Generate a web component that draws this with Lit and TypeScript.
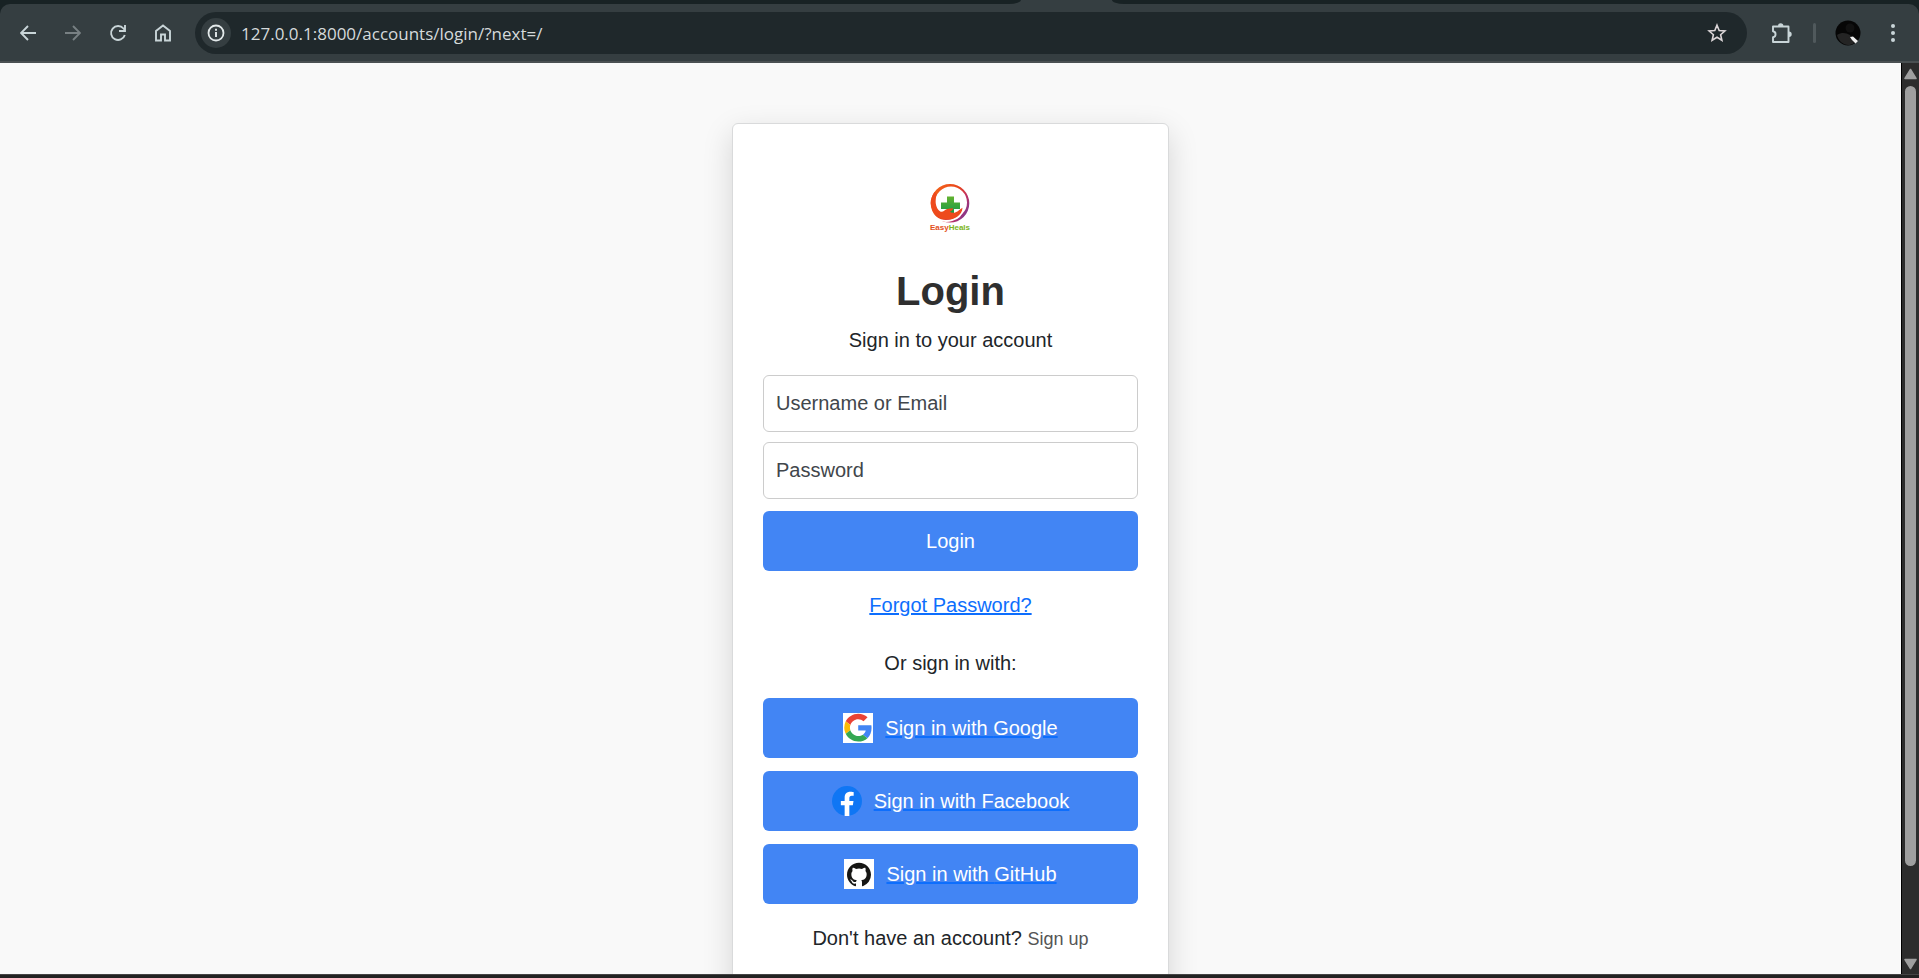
import { LitElement, html, css, svg } from "lit";
import { customElement } from "lit/decorators.js";

const icon = (size: number, body: unknown, box = "0 0 24 24") =>
  html`<svg width=${size} height=${size} viewBox=${box} fill="none" aria-hidden="true">${body}</svg>`;

const googleIcon = icon(30, svg`
  <rect width="48" height="48" fill="#fff"/>
  <g transform="translate(2 1) scale(.93)">
    <path fill="#EA4335" d="M24 9.5c3.54 0 6.71 1.22 9.21 3.6l6.85-6.85C35.9 2.38 30.47 0 24 0 14.62 0 6.51 5.38 2.56 13.22l7.98 6.19C12.43 13.72 17.74 9.5 24 9.5z"/>
    <path fill="#4285F4" d="M46.98 24.55c0-1.57-.15-3.09-.38-4.55H24v9.02h12.94c-.58 2.96-2.26 5.48-4.78 7.18l7.73 6c4.51-4.18 7.09-10.36 7.09-17.65z"/>
    <path fill="#FBBC05" d="M10.53 28.59A14.5 14.5 0 0 1 9.77 24c0-1.6.27-3.14.76-4.59l-7.98-6.19A23.99 23.99 0 0 0 0 24c0 3.88.92 7.54 2.56 10.78l7.97-6.19z"/>
    <path fill="#34A853" d="M24 48c6.48 0 11.93-2.13 15.89-5.81l-7.73-6c-2.15 1.45-4.92 2.3-8.16 2.3-6.26 0-11.57-4.22-13.47-9.91l-7.98 6.19C6.51 42.62 14.62 48 24 48z"/>
  </g>`, "0 0 48 48");

const facebookIcon = icon(30, svg`
  <circle cx="12" cy="12" r="12" fill="#0f76f4"/>
  <path fill="#fff" d="M16.67 15.47 17.2 12h-3.33V9.75c0-.95.47-1.87 1.96-1.87h1.51V4.92s-1.37-.23-2.69-.23c-2.74 0-4.53 1.66-4.53 4.67V12H7.08v3.47h3.04V24h3.75v-8.53z"/>`);

const githubIcon = icon(30, svg`
  <rect width="30" height="30" fill="#fff"/>
  <path transform="translate(3 3.5)" fill="#161614" d="M12 .3C5.37.3 0 5.67 0 12.3c0 5.3 3.44 9.8 8.2 11.38.6.11.82-.26.82-.58v-2.03c-3.34.72-4.04-1.61-4.04-1.61-.55-1.39-1.33-1.76-1.33-1.76-1.09-.74.08-.73.08-.73 1.2.09 1.84 1.24 1.84 1.24 1.07 1.83 2.8 1.3 3.49 1 .11-.78.42-1.31.76-1.61-2.66-.3-5.47-1.33-5.47-5.93 0-1.31.47-2.38 1.24-3.22-.13-.3-.54-1.52.11-3.18 0 0 1.01-.32 3.3 1.23a11.5 11.5 0 0 1 6.01 0c2.29-1.55 3.3-1.23 3.3-1.23.65 1.66.24 2.88.12 3.18.77.84 1.23 1.91 1.23 3.22 0 4.61-2.81 5.63-5.48 5.92.43.37.81 1.1.81 2.22v3.29c0 .32.22.7.83.58A12 12 0 0 0 24 12.3C24 5.67 18.63.3 12 .3z"/>`, "0 0 30 30");

const brandLogo = svg`
  <defs>
    <linearGradient id="ring" x1="0" y1=".2" x2="1" y2=".8">
      <stop offset="0" stop-color="#f4661b"/><stop offset=".5" stop-color="#e8431c"/>
      <stop offset=".72" stop-color="#c02f62"/><stop offset="1" stop-color="#743a97"/>
    </linearGradient>
    <linearGradient id="cross" x1="0" y1="0" x2="0" y2="1">
      <stop offset="0" stop-color="#62b22f"/><stop offset="1" stop-color="#159a48"/>
    </linearGradient>
  </defs>
  <path fill="url(#ring)" fill-rule="evenodd" d="M29.700 49.300a19.300 19.300 0 1 1 38.600 0a19.300 19.300 0 1 1-38.600 0zM34 48.500a16 16 0 1 0 32 0a16 16 0 1 0-32 0z"/>
  <path fill="url(#cross)" d="M46 42.500h7v6h6V55h-6v5h-7v-5h-6v-6.500h6z"/>
  <path fill="none" stroke="#fff" stroke-width="2" d="M30 58c5 9 14 10 21 8 6-1.500 10-6 11-12"/>
  <path fill="#ee4a1d" d="M29.700 49c0-4 1.500-8 4-11l2 2c-2 6-1.500 14 3.500 17.500 2.500 1.500 5-2 7-2.500s4-.700 6-.700c-.300 2-2 3-3.500 3.400 2 1.300 4 1.500 6 .600 2.500-1 4-3 6.800-4.600 0 4-2.500 7-5.300 9-3 2-6.500 3-10 2.900-4 0-8-1.600-11-4.600-3.500-3.500-5.500-8-5.500-12z"/>`;

@customElement("app-root")
export class AppRoot extends LitElement {
  static styles = css`
    * { box-sizing: border-box; }
    :host {
      display: flex;
      flex-direction: column;
      height: 100vh;
      overflow: hidden;
      background: #182224;
      color: #212529;
      font: 20px/30px "Liberation Sans", Arial, sans-serif;
    }
    svg { display: block; flex: none; }
    button { font: inherit; border: 0; padding: 0; cursor: pointer; }

    .tabs { flex: none; display: flex; height: 4px; background: #353e41; }
    .tabs-left { flex: 1021; background: #182224; border-bottom-right-radius: 12px 4px; }
    .tab-active { flex: 91; }
    .tabs-right { flex: 807; background: #182224; border-bottom-left-radius: 12px 4px; }

    .toolbar {
      flex: none;
      display: flex;
      align-items: center;
      gap: 5px;
      height: 59px;
      padding: 0 6px 0 8px;
      background: #353e41;
      border-bottom: 2px solid #4a5052;
      border-radius: 10px 10px 0 0;
      color: #c9d5d8;
    }
    .tool {
      flex: none;
      display: grid;
      place-items: center;
      width: 40px;
      height: 40px;
      background: none;
      color: inherit;
      border-radius: 50%;
    }
    .tool:disabled { color: #788083; }
    .address {
      flex: 1;
      display: flex;
      align-items: center;
      gap: 10px;
      height: 42px;
      margin: 0 9px 0 7px;
      padding: 0 10px 0 6px;
      border-radius: 21px;
      background: #1f282b;
    }
    .site-info {
      flex: none;
      display: grid;
      place-items: center;
      width: 30px;
      height: 30px;
      border-radius: 50%;
      background: #353e41;
      color: #e3e9ea;
    }
    .url {
      flex: 1;
      min-width: 0;
      height: 32px;
      padding: 2px 0 0;
      border: 0;
      outline: 0;
      background: none;
      color: #d5dadb;
      font: 17px/30px "Open Sans", "Noto Sans", sans-serif;
    }
    .divider { flex: none; width: 3px; height: 20px; margin: 0 7px; border-radius: 2px; background: #50595c; }

    .view { flex: 1; display: flex; min-height: 0; }
    .page {
      flex: 1;
      min-width: 0;
      overflow: hidden;
      display: flex;
      justify-content: center;
      align-items: flex-start;
      padding-top: 60px;
      background: #f9f9f9;
    }
    .card {
      flex: none;
      display: flex;
      flex-direction: column;
      align-items: center;
      width: 437px;
      padding: 30px 30px 60px;
      background: #fff;
      border: 1px solid #d9dadb;
      border-radius: 6px;
      box-shadow: 0 10px 30px rgba(0, 0, 0, 0.15);
    }
    .brand { margin-bottom: 13px; }
    .brand-name { font: bold 8px "Liberation Sans", Arial, sans-serif; }
    h1 { margin: 0 0 10px; font-size: 40px; line-height: 48px; color: #2f2f2f; }
    p { margin: 0; }
    form { display: flex; flex-direction: column; gap: 10px; width: 100%; margin: 20px 0 19px; }
    .field {
      width: 100%;
      height: 57px;
      padding: 0 12px;
      border: 1px solid #ccc;
      border-radius: 6px;
      background: #fff;
      color: #212529;
      font: inherit;
    }
    .field::placeholder { color: #41464b; opacity: 1; }
    .action {
      display: flex;
      align-items: center;
      justify-content: center;
      gap: 12px;
      width: 100%;
      height: 60px;
      border-radius: 6px;
      background: #4285f4;
      color: #fff;
    }
    .submit { margin-top: 2px; }
    .forgot { color: #0d6efd; text-decoration: underline; }
    .alt { margin: 28px 0 20px; }
    .social { display: flex; flex-direction: column; gap: 13px; width: 100%; margin-bottom: 19px; }
    .provider { text-decoration: none; }
    .provider-text { text-decoration: underline #0d6efd; }
    .signup { color: #555; font-size: 18px; text-decoration: none; }

    .scroll {
      flex: none;
      display: flex;
      flex-direction: column;
      align-items: center;
      gap: 5px;
      width: 18px;
      padding: 5px 0 3px;
      background: #2c2c2c;
      border-left: 1px solid #000;
      color: #9f9f9f;
    }
    .track { flex: 1; width: 11px; }
    .thumb { height: 90%; border-radius: 6px; background: #9f9f9f; }
    .edge { flex: none; height: 4px; background: #222; border-top: 1px solid #444; }
  `;

  private provider(name: string, mark: unknown) {
    return html`<a class="action provider" href="#">${mark}<span class="provider-text">Sign in with ${name}</span></a>`;
  }

  render() {
    return html`
      <div class="tabs"><div class="tabs-left"></div><div class="tab-active"></div><div class="tabs-right"></div></div>
      <header class="toolbar">
        <button class="tool" aria-label="Back">
          ${icon(16, svg`<path d="M16 8H1.500M8 1 1 8l7 7" stroke="currentColor" stroke-width="1.9"/>`, "0 0 16 16")}
        </button>
        <button class="tool" aria-label="Forward" disabled>
          ${icon(16, svg`<path d="M0 8h14.500M8 1l7 7-7 7" stroke="currentColor" stroke-width="1.9"/>`, "0 0 16 16")}
        </button>
        <button class="tool" aria-label="Reload">
          ${icon(18, svg`<path d="M15.800 11a7 7 0 1 1-1.300-6.500L16 6.200M16 1v6h-6" stroke="currentColor" stroke-width="1.900"/>`, "0 0 18 18")}
        </button>
        <button class="tool" aria-label="Home">
          ${icon(18, svg`<path d="M2 16.500V7L9 1.500 16 7v9.500h-5v-6H7v6z" stroke="currentColor" stroke-width="1.900"/>`, "0 0 18 18")}
        </button>
        <div class="address">
          <button class="site-info" aria-label="Site information">
            ${icon(18, svg`<circle cx="9" cy="9" r="7.500" stroke="currentColor" stroke-width="1.800"/><path d="M9 8v5M9 4.800v2" stroke="currentColor" stroke-width="1.900"/>`, "0 0 18 18")}
          </button>
          <input class="url" aria-label="Address" value="127.0.0.1:8000/accounts/login/?next=/" />
          <button class="tool" aria-label="Bookmark">
            ${icon(20, svg`<path d="m10 2.200 2.200 5.300 5.700.5-4.300 3.700 1.300 5.600-4.900-3-4.900 3 1.300-5.600L2.100 8l5.700-.5z" stroke="#dcd6d8" stroke-width="1.600"/>`, "0 0 20 20")}
          </button>
        </div>
        <button class="tool" aria-label="Extensions">
          ${icon(22, svg`<path d="M3 4.500h15.500V20H3v-4.800c3.400-.5 3.400-5.400 0-5.900z" stroke="currentColor" stroke-width="1.900" stroke-linejoin="round"/><path d="M8 4a2.700 2.700 0 0 1 5.400 0zM19 9.600a2.700 2.700 0 0 1 0 5.400z" fill="currentColor"/>`, "0 0 22 22")}
        </button>
        <span class="divider"></span>
        <button class="tool" aria-label="Profile">
          ${icon(26, svg`<circle cx="13" cy="13" r="12.500" fill="#060606"/><path d="M2 15c5-3 9-2 13 0l4 8c-7 5-15 0-17-8z" fill="#242424"/><circle cx="15" cy="8" r="4.500" fill="#111"/><path d="m15 17 3-.5 5 4.500-2.500 2.500-3.500-3.500z" fill="#eee"/>`, "0 0 26 26")}
        </button>
        <button class="tool" aria-label="Menu">
          ${icon(20, svg`<g fill="currentColor"><circle cx="10" cy="3" r="2"/><circle cx="10" cy="10" r="2"/><circle cx="10" cy="17" r="2"/></g>`, "0 0 20 20")}
        </button>
      </header>
      <div class="view">
        <main class="page">
          <section class="card">
            <svg class="brand" width="100" height="100" viewBox="0 0 100 100" role="img" aria-label="EasyHeals">
              ${brandLogo}
              <text class="brand-name" x="49" y="76" text-anchor="middle"><tspan fill="#e2501c">Easy</tspan><tspan fill="#7ab51d">Heals</tspan></text>
            </svg>
            <h1>Login</h1>
            <p>Sign in to your account</p>
            <form @submit=${(e: Event) => e.preventDefault()}>
              <input class="field" type="text" aria-label="Username or Email" placeholder="Username or Email" />
              <input class="field" type="password" aria-label="Password" placeholder="Password" />
              <button class="action submit" type="submit">Login</button>
            </form>
            <a class="forgot" href="#">Forgot Password?</a>
            <p class="alt">Or sign in with:</p>
            <div class="social">
              ${this.provider("Google", googleIcon)}
              ${this.provider("Facebook", facebookIcon)}
              ${this.provider("GitHub", githubIcon)}
            </div>
            <p>Don't have an account? <a class="signup" href="#">Sign up</a></p>
          </section>
        </main>
        <div class="scroll" aria-hidden="true">
          ${icon(13, svg`<path d="M6.500 1.500 12 10.500H1z" fill="currentColor" stroke="currentColor" stroke-width="1.500" stroke-linejoin="round"/>`, "0 0 13 13")}
          <div class="track"><div class="thumb"></div></div>
          ${icon(13, svg`<path d="M6.500 10.500 12 1.500H1z" fill="currentColor" stroke="currentColor" stroke-width="1.500" stroke-linejoin="round"/>`, "0 0 13 13")}
        </div>
      </div>
      <div class="edge"></div>
    `;
  }
}
